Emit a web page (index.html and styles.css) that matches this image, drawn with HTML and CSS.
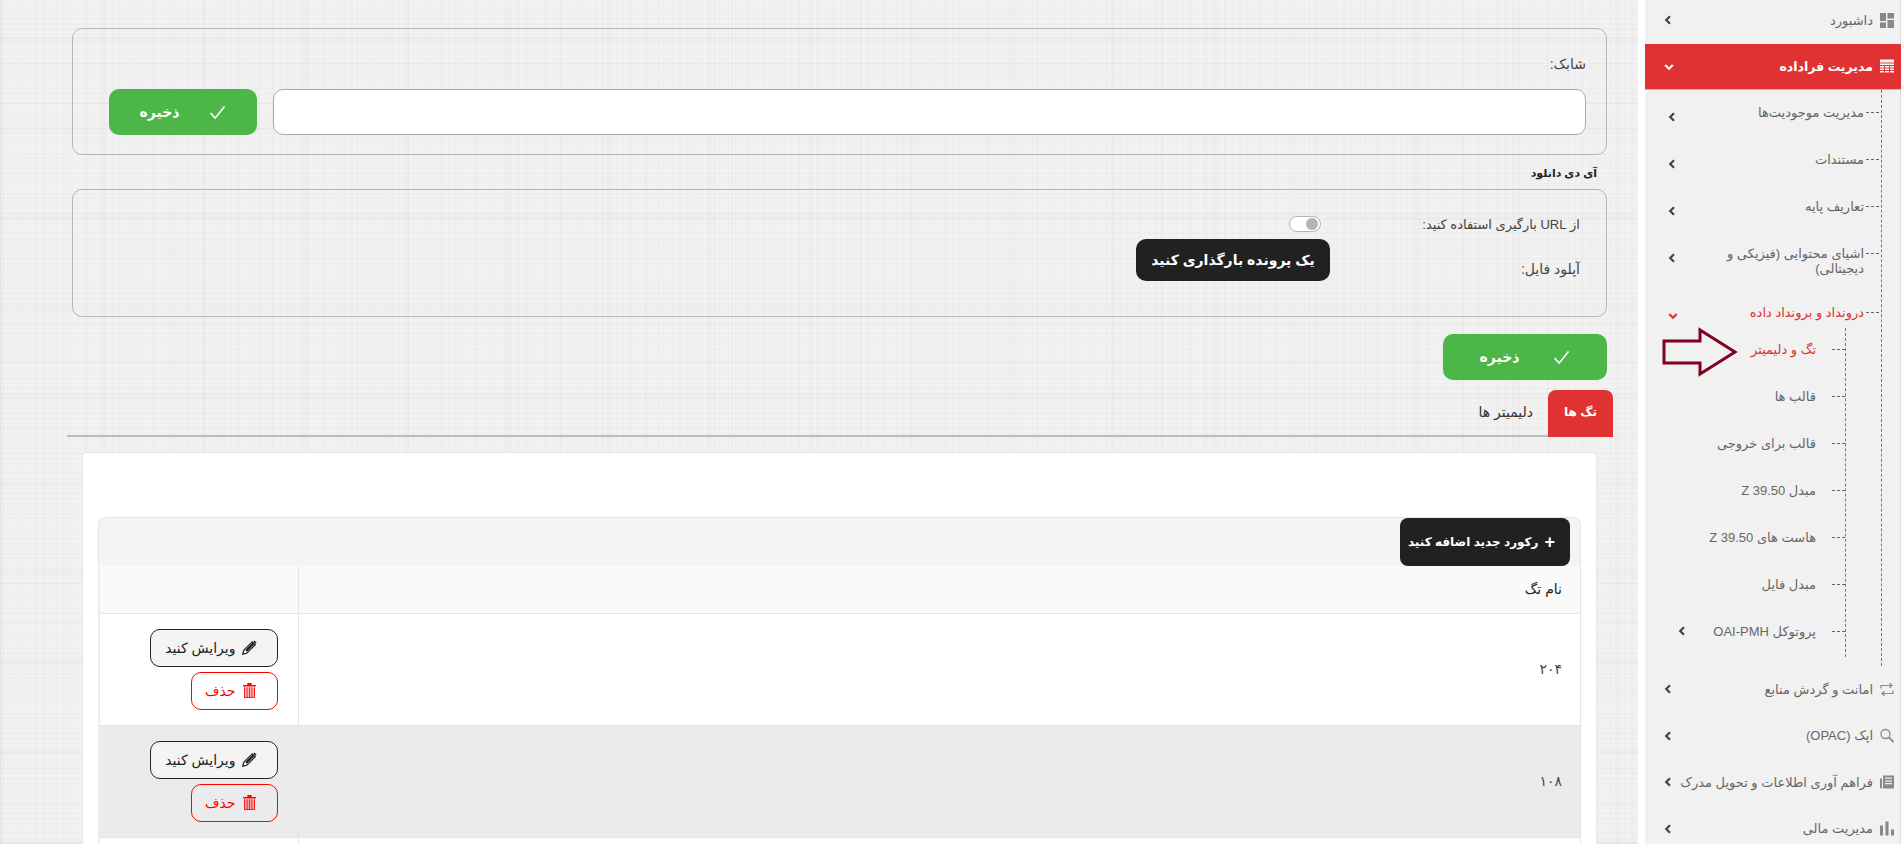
FILE: index.html
```html
<!DOCTYPE html>
<html lang="fa" dir="rtl">
<head>
    <meta charset="UTF-8">
    <meta name="viewport" content="width=device-width, initial-scale=1.0">
    <title>تگ و دلیمیتر</title>
    <link rel="stylesheet" href="styles.css">
</head>
<body>
<svg class="svg-defs" aria-hidden="true">
    <defs>
        <symbol id="i-left" viewBox="0 0 8 10"><path d="M6 1.2 2.2 5 6 8.8" fill="none" stroke="currentColor" stroke-width="2.2"/></symbol>
        <symbol id="i-down" viewBox="0 0 10 8"><path d="M1.2 2 5 5.8 8.8 2" fill="none" stroke="currentColor" stroke-width="2.2"/></symbol>
        <symbol id="i-check" viewBox="0 0 18 16"><path d="M1.5 8.5 6.5 14 16.5 1.5" fill="none" stroke="currentColor" stroke-width="1.7"/></symbol>
        <symbol id="i-pencil" viewBox="0 0 14 14"><path d="M0.7 13.3 1.6 9.6 9.6 1.6 12.400 4.400 4.400 12.400Z" fill="none" stroke="currentColor" stroke-width="1.1"/><path d="M3 9.400 9.800 2.600 11.400 4.200 4.600 11Z M10.600 1.400 11.600 0.400 13.600 2.400 12.600 3.400Z" fill="currentColor"/></symbol>
        <symbol id="i-trash" viewBox="0 0 12 14"><path d="M0 1.800h12v1.400H0zM4 0h4v1.800H4z" fill="currentColor"/><path d="M1 4h10v10H1z" fill="currentColor" opacity=".3"/><path d="M1 4h.8v10H1zM3.400 4h.7v10h-.7zM5.650 4h.7v10h-.7zM7.900 4h.7v10h-.7zM10.200 4h.8v10h-.8zM1 13.200h10v.8H1z" fill="currentColor"/></symbol>
    </defs>
</svg>

<div class="page">
    <nav class="sidebar">
        <ul class="menu">
            <li class="menu-item first">
                <svg class="menu-icon" viewBox="0 0 14 15"><path d="M0 0h6v8H0zM7.500 0H14v5.500H7.500zM0 9.500h6V15H0zM7.500 7H14v8H7.500z" fill="#888"/></svg>
                <span class="menu-text">داشبورد</span>
                <svg class="chevron"><use href="#i-left"/></svg>
            </li>
            <li class="menu-item active">
                <svg class="menu-icon" viewBox="0 0 14 14"><path d="M0 0h14v3H0zM0 4h14v1.500H0zM0 6.500h4V8H0zM5 6.500h4V8H5zM10 6.500h4V8h-4zM0 9h4v1.500H0zM5 9h4v1.500H5zM10 9h4v1.500h-4zM0 11.500h4V13H0zM5 11.500h4V13H5zM10 11.500h4V13h-4z" fill="#fff"/></svg>
                <span class="menu-text">مدیریت فراداده</span>
                <svg class="chevron down"><use href="#i-down"/></svg>
            </li>
        </ul>

        <ul class="sub-menu">
            <li class="sub-item"><i class="dash"></i><span class="sub-text">مدیریت موجودیت‌ها</span><svg class="chevron"><use href="#i-left"/></svg></li>
            <li class="sub-item"><i class="dash"></i><span class="sub-text">مستندات</span><svg class="chevron"><use href="#i-left"/></svg></li>
            <li class="sub-item"><i class="dash"></i><span class="sub-text">تعاریف پایه</span><svg class="chevron"><use href="#i-left"/></svg></li>
            <li class="sub-item tall"><i class="dash"></i><span class="sub-text">اشیای محتوایی (فیزیکی و دیجیتالی)</span><svg class="chevron"><use href="#i-left"/></svg></li>
            <li class="sub-item open"><i class="dash"></i><span class="sub-text">درونداد و برونداد داده</span><svg class="chevron down"><use href="#i-down"/></svg></li>
            <li class="inner-wrap">
                <ul class="inner-menu">
                    <li class="inner-item current"><i class="dash"></i><span>تگ و دلیمیتر</span></li>
                    <li class="inner-item"><i class="dash"></i><span>قالب ها</span></li>
                    <li class="inner-item"><i class="dash"></i><span>قالب برای خروجی</span></li>
                    <li class="inner-item"><i class="dash"></i><span>مبدل Z 39.50</span></li>
                    <li class="inner-item"><i class="dash"></i><span>هاست های Z 39.50</span></li>
                    <li class="inner-item"><i class="dash"></i><span>مبدل فایل</span></li>
                    <li class="inner-item"><i class="dash"></i><span>پروتوکل OAI-PMH</span><svg class="chevron"><use href="#i-left"/></svg></li>
                </ul>
            </li>
        </ul>

        <ul class="menu">
            <li class="menu-item">
                <svg class="menu-icon" viewBox="0 0 14 14"><path d="M1 6V3h10M9.500 0.800 12 3 9.500 5.200M13 8v3H3M4.500 8.800 2 11l2.500 2.200" fill="none" stroke="#888" stroke-width="1.200"/></svg>
                <span class="menu-text">امانت و گردش منابع</span>
                <svg class="chevron"><use href="#i-left"/></svg>
            </li>
            <li class="menu-item">
                <svg class="menu-icon" viewBox="0 0 14 14"><circle cx="5.500" cy="5.500" r="4.500" fill="none" stroke="#888" stroke-width="1.300"/><path d="M9 9l4.500 4.500" stroke="#888" stroke-width="1.800"/></svg>
                <span class="menu-text">اپک (OPAC)</span>
                <svg class="chevron"><use href="#i-left"/></svg>
            </li>
            <li class="menu-item">
                <svg class="menu-icon" viewBox="0 0 14 14"><path d="M3 0h11v11.500a1.500 1.500 0 0 1-1.500 1.500H3zM5 2v1.300h7V2zM5 5v1.200h7V5zM5 7.500v1.200h7V7.500z" fill="#888" fill-rule="evenodd"/><path d="M0 3h2v10H1a1 1 0 0 1-1-1z" fill="#888"/></svg>
                <span class="menu-text">فراهم آوری اطلاعات و تحویل مدرک</span>
                <svg class="chevron"><use href="#i-left"/></svg>
            </li>
            <li class="menu-item">
                <svg class="menu-icon" viewBox="0 0 14 14"><path d="M0 4h3v10H0zM5.500 0h3v14h-3zM11 8h3v6h-3z" fill="#888"/></svg>
                <span class="menu-text">مدیریت مالی</span>
                <svg class="chevron"><use href="#i-left"/></svg>
            </li>
        </ul>

        <svg class="pointer" viewBox="0 0 76 50"><path d="M2 14H38V3L73 25 38 47V36H2Z" fill="none" stroke="#800020" stroke-width="3"/></svg>
    </nav>

    <main class="content">
        <section class="box box-isbn">
            <label class="field-label" for="shabak">شابک:</label>
            <div class="field-row">
                <input class="text-input" type="text" id="shabak">
                <button class="btn-save small" type="button"><svg class="check"><use href="#i-check"/></svg>ذخیره</button>
            </div>
        </section>

        <h2 class="box-title">آی دی دانلود</h2>
        <section class="box box-upload">
            <span class="upload-label">از URL بارگیری استفاده کنید:</span>
            <div class="upload-control"><span class="toggle"><i></i></span></div>
            <span class="upload-label second">آپلود فایل:</span>
            <div class="upload-control"><button class="btn-upload" type="button">یک پرونده بارگذاری کنید</button></div>
        </section>

        <div class="save-row">
            <button class="btn-save" type="button"><svg class="check"><use href="#i-check"/></svg>ذخیره</button>
        </div>

        <div class="tabs">
            <a class="tab selected">تگ ها</a>
            <a class="tab">دلیمیتر ها</a>
        </div>

        <div class="card">
            <div class="table-head">
                <button class="btn-add" type="button"><span class="plus">+</span>رکورد جدید اضافه کنید</button>
            </div>
            <table class="data-table">
                <thead>
                    <tr><th>نام تگ</th><th class="col-actions"></th></tr>
                </thead>
                <tbody>
                    <tr>
                        <td>۲۰۴</td>
                        <td class="col-actions">
                            <button class="btn-edit" type="button"><svg class="btn-icon"><use href="#i-pencil"/></svg>ویرایش کنید</button>
                            <button class="btn-del" type="button"><svg class="btn-icon"><use href="#i-trash"/></svg>حذف</button>
                        </td>
                    </tr>
                    <tr class="striped">
                        <td>۱۰۸</td>
                        <td class="col-actions">
                            <button class="btn-edit" type="button"><svg class="btn-icon"><use href="#i-pencil"/></svg>ویرایش کنید</button>
                            <button class="btn-del" type="button"><svg class="btn-icon"><use href="#i-trash"/></svg>حذف</button>
                        </td>
                    </tr>
                    <tr class="empty-row"><td></td><td class="col-actions"></td></tr>
                </tbody>
            </table>
        </div>
    </main>
</div>
</body>
</html>
```

FILE: styles.css
```css
* {
    box-sizing: border-box;
}
html, body {
    margin: 0;
    height: 844px;
    overflow: hidden;
}
body {
    font-family: "Liberation Sans", "DejaVu Sans", sans-serif;
    font-size: 13px;
    color: #444;
    background-color: #f2f2f2;
    background-image:
        repeating-linear-gradient(90deg, rgba(0,0,0,0.016) 0 1px, transparent 1px 7px),
        repeating-linear-gradient(90deg, rgba(0,0,0,0.014) 0 1px, transparent 1px 17px),
        repeating-linear-gradient(90deg, rgba(0,0,0,0.012) 0 2px, transparent 2px 43px),
        repeating-linear-gradient(90deg, rgba(0,0,0,0.010) 0 5px, transparent 5px 101px),
        repeating-linear-gradient(0deg, rgba(0,0,0,0.016) 0 1px, transparent 1px 5px),
        repeating-linear-gradient(0deg, rgba(0,0,0,0.014) 0 1px, transparent 1px 13px),
        repeating-linear-gradient(0deg, rgba(0,0,0,0.012) 0 2px, transparent 2px 37px),
        repeating-linear-gradient(0deg, rgba(0,0,0,0.010) 0 6px, transparent 6px 89px);
}
.svg-defs {
    display: none;
}
ul {
    list-style: none;
    margin: 0;
    padding: 0;
}
button {
    font-family: inherit;
    cursor: pointer;
}

.page {
    display: flex;
    height: 844px;
}

/* sidebar */
.sidebar {
    position: relative;
    flex: 0 0 263px;
    height: 844px;
    overflow: hidden;
    background: #f1f1f1;
    border-left: 7px solid #fff;
    box-shadow: -1px 0 0 #ddd inset;
    color: #666;
}
.menu-item {
    display: flex;
    align-items: center;
    height: 46.5px;
    padding: 0 7px 0 19px;
    font-size: 13px;
}
.menu-item.first {
    height: 44px;
    padding-bottom: 4px;
}
.menu-item.active {
    height: 46px;
    background: #e03232;
    color: #fff;
    font-size: 12.5px;
    font-weight: bold;
    border-bottom: 1px solid #bbb;
}
.menu-icon {
    flex: 0 0 14px;
    width: 14px;
    height: 15px;
    margin-left: 7px;
}
.menu-text {
    flex: 1;
    white-space: nowrap;
}
.chevron {
    flex: 0 0 8px;
    width: 8px;
    height: 10px;
    color: #444;
}
.chevron.down {
    width: 10px;
    flex-basis: 10px;
    height: 8px;
}
.active .chevron {
    color: #fff;
}

.sub-menu {
    margin-right: 19px;
    padding-top: 8px;
    height: 576px;
    border-right: 1px dashed #777;
    font-size: 13px;
}
.sub-item {
    display: flex;
    align-items: flex-start;
    height: 47px;
    padding: 7px 2px 0 23px;
    line-height: 15px;
}
.sub-item.tall {
    height: 59px;
}
.sub-item.open {
    height: 30px;
    color: #e03232;
}
.sub-item .chevron {
    margin-top: 7px;
}
.sub-item.open .chevron {
    color: #e03232;
}
.sub-text {
    flex: 1;
    padding-left: 20px;
}
.dash {
    flex: 0 0 13px;
    height: 0;
    margin: 7px 0 0 2px;
    border-top: 1px dashed #666;
}
.inner-menu {
    margin-right: 35px;
    height: 329px;
    border-right: 1px dashed #777;
}
.inner-item {
    display: flex;
    align-items: center;
    height: 47px;
    padding-left: 33px;
    padding-bottom: 5px;
}
.inner-item .dash {
    margin: 0 0 0 16px;
}
.inner-item span {
    flex: 1;
}
.inner-item.current {
    color: #e03232;
}

/* the hand-drawn arrow on the screenshot */
.pointer {
    position: absolute;
    left: 17px;
    top: 327px;
    width: 76px;
    height: 50px;
}

/* content */
.content {
    flex: 1;
    min-width: 0;
    padding: 28px 31px 0 72px;
}
.box {
    border: 1px solid #b5b5b5;
    border-radius: 10px;
}
.box-isbn {
    height: 127px;
    padding: 27px 20px 0 36px;
}
.field-label {
    display: block;
    height: 16px;
    line-height: 16px;
    font-size: 14px;
}
.field-row {
    display: flex;
    gap: 16px;
    margin-top: 17px;
}
.text-input {
    flex: 1;
    height: 46px;
    border: 1px solid #aaa;
    border-radius: 10px;
    background: #fff;
}
.btn-save {
    display: flex;
    align-items: center;
    justify-content: center;
    gap: 34px;
    width: 164px;
    height: 46px;
    border: none;
    border-radius: 10px;
    background: #4cb748;
    color: #fff;
    font-size: 14px;
    font-weight: bold;
}
.btn-save.small {
    width: 148px;
    gap: 30px;
}
.check {
    width: 17px;
    height: 15px;
}
.box-title {
    margin: 10px 10px 8px 0;
    height: 16px;
    line-height: 16px;
    font-size: 11px;
    font-weight: bold;
    color: #222;
}
.box-upload {
    display: grid;
    grid-template-columns: 276px 1fr;
    grid-template-rows: 16px 42px;
    row-gap: 7px;
    height: 128px;
    padding-top: 26px;
}
.upload-label {
    padding-right: 26px;
    line-height: 18px;
    white-space: nowrap;
}
.upload-label.second {
    padding-top: 21px;
    font-size: 14px;
}
.toggle {
    display: block;
    position: relative;
    width: 32px;
    height: 16px;
    margin-right: 9px;
    border: 1px solid #b5b5b5;
    border-radius: 8px;
    background: #fff;
}
.toggle i {
    position: absolute;
    right: 2px;
    top: 1px;
    width: 12px;
    height: 12px;
    border-radius: 50%;
    background: #adb5bd;
}
.btn-upload {
    width: 194px;
    height: 42px;
    border: none;
    border-radius: 10px;
    background: #212121;
    color: #fff;
    font-size: 14px;
    font-weight: bold;
}
.save-row {
    display: flex;
    margin-top: 17px;
}
.tabs {
    display: flex;
    height: 47px;
    margin: 10px -6px 0 -5px;
    border-bottom: 2px solid #bbb;
}
.tab {
    display: block;
    height: 47px;
    padding: 14px 15px 0;
    line-height: 16px;
    font-size: 14px;
    color: #333;
}
.tab.selected {
    width: 65px;
    padding: 14px 0 0;
    text-align: center;
    background: #e03232;
    color: #fff;
    font-size: 12px;
    font-weight: bold;
    border-radius: 8px 8px 0 0;
}
.card {
    height: 392px;
    overflow: hidden;
    margin: 15px 10px 0;
    padding: 64px 15px 0;
    background: #fff;
    border: 1px solid #e5e5e5;
    border-bottom: none;
    border-radius: 4px 4px 0 0;
}
.table-head {
    display: flex;
    height: 49px;
    padding-right: 10px;
    background: #f4f4f4;
    border: 1px solid #e5e5e5;
    border-bottom: none;
    border-radius: 8px 8px 0 0;
}
.btn-add {
    display: flex;
    align-items: center;
    gap: 6px;
    width: 170px;
    height: 48px;
    padding: 0 15px 0 5px;
    border: none;
    border-radius: 8px;
    background: #212121;
    color: #fff;
    font-size: 12px;
    font-weight: bold;
    white-space: nowrap;
}
.plus {
    font-size: 18px;
    font-weight: bold;
}
.data-table {
    width: 100%;
    border-collapse: collapse;
    border-left: 2px solid #eee;
    border-right: 1px solid #e5e5e5;
}
.data-table th {
    height: 47px;
    padding: 0 18px;
    text-align: right;
    background: #fafafa;
    border-bottom: 1px solid #e5e5e5;
    color: #222;
    font-size: 14px;
    font-weight: normal;
}
.data-table td {
    padding: 15px 18px 15px 20px;
    text-align: right;
    font-size: 14px;
    border-bottom: 1px solid #e5e5e5;
}
.data-table .col-actions {
    width: 199px;
    padding-right: 20px;
    border-right: 1px solid #e5e5e5;
}
.striped td {
    background: #ebebeb;
}
.empty-row td {
    height: 20px;
    padding: 0;
}
.btn-edit, .btn-del {
    display: flex;
    align-items: center;
    gap: 6px;
    height: 38px;
    border-radius: 10px;
    font-size: 14px;
    padding: 0 20px 0 0;
}
.btn-edit {
    width: 128px;
    margin-bottom: 5px;
    background: #f4f4f4;
    border: 1px solid #222;
    color: #222;
}
.btn-del {
    width: 87px;
    background: transparent;
    border: 1px solid #f00;
    color: #f00;
}
.btn-icon {
    width: 15px;
    height: 15px;
}
```
